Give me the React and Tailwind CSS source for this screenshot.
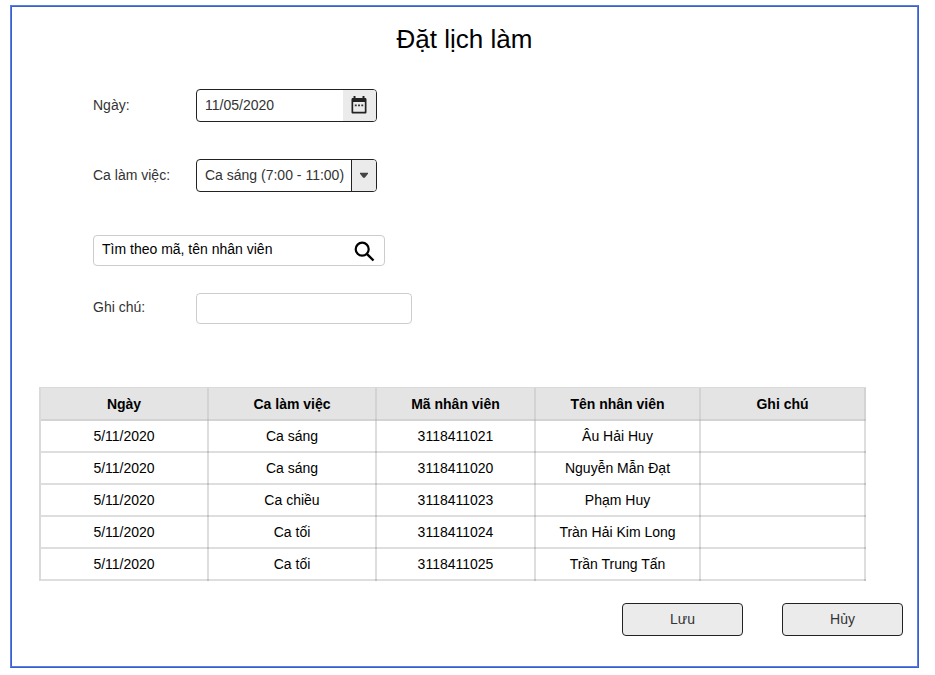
const columns = ['Ngày', 'Ca làm việc', 'Mã nhân viên', 'Tên nhân viên', 'Ghi chú'];

const rows = [
  ['5/11/2020', 'Ca sáng', '3118411021', 'Âu Hải Huy', ''],
  ['5/11/2020', 'Ca sáng', '3118411020', 'Nguyễn Mẫn Đạt', ''],
  ['5/11/2020', 'Ca chiều', '3118411023', 'Phạm Huy', ''],
  ['5/11/2020', 'Ca tối', '3118411024', 'Tràn Hải Kim Long', ''],
  ['5/11/2020', 'Ca tối', '3118411025', 'Trần Trung Tấn', ''],
];

function CalendarIcon() {
  return (
    <svg width="16" height="18" viewBox="0 0 16 18">
      <path
        fill="#222"
        fillRule="evenodd"
        d="M2.500 0h2v2h7V0h2v2h.7c.8 0 1.300.6 1.300 1.300V16.200c0 .8-.5 1.300-1.300 1.300H1.800C1 17.500 .5 17 .5 16.200V3.300C.5 2.600 1 2 1.800 2h.7zM2.200 6v9.800h11.600V6z"
      />
      <path fill="#333" d="M3.800 8.500h1.900v1.800H3.800zM7.050 8.500h1.900v1.800h-1.900zM10.300 8.500h1.900v1.800h-1.900z" />
    </svg>
  );
}

function SearchIcon() {
  return (
    <svg width="21" height="21" viewBox="0 0 21 21" fill="none" stroke="#000">
      <circle cx="8.200" cy="8.200" r="6.500" strokeWidth="2.200" />
      <path d="M12.800 12.800L19.500 19.500" strokeWidth="2.400" />
    </svg>
  );
}

function TableRow({ cells, header }) {
  return (
    <div
      role="row"
      className={
        'grid grid-cols-[168px_168px_159px_165px_165px] border-b-2 ' +
        (header ? 'h-[33px] border-black/7 bg-[#e4e4e4] font-bold' : 'h-8 border-black/13')
      }
    >
      {cells.map((cell, i) => (
        <div
          key={i}
          role="cell"
          className={
            '-mb-0.5 flex items-center justify-center border-r-2 ' +
            (header ? 'border-black/7 pb-px' : 'border-black/13 pb-[3px]')
          }
        >
          {cell}
        </div>
      ))}
    </div>
  );
}

export default function App() {
  return (
    <div className="h-[675px] w-[935px] bg-white pt-[5px] pl-[10px] font-['Liberation_Sans',Arial,sans-serif] text-sm text-black">
      <div className="h-[663px] w-[909px] border border-t-[#5b7fe3] border-r-[#3a5fc8] border-b-[#3a5fc8] border-l-[#5b7fe3]">
        <div className="flex h-full flex-col border border-t-[#3a5fc8] border-r-[#5b7fe3] border-b-[#5b7fe3] border-l-[#3a5fc8]">
          <h1 className="mt-4 text-center text-[26px] leading-[32px]">Đặt lịch làm</h1>

          <div className="mt-[34px] ml-[81px] flex h-[33px] items-center text-[#333]">
            <label className="w-[103px] pb-0.5">Ngày:</label>
            <div className="flex h-full w-[181px] overflow-hidden rounded border border-[#222]">
              <span className="flex flex-1 items-center pb-0.5 pl-2">11/05/2020</span>
              <span className="flex w-[33px] items-center justify-center bg-[#ebebeb] pr-px pb-px">
                <CalendarIcon />
              </span>
            </div>
          </div>

          <div className="mt-[37px] ml-[81px] flex h-[33px] items-center text-[#333]">
            <label className="w-[103px] pb-0.5">Ca làm việc:</label>
            <div className="flex h-full w-[181px] overflow-hidden rounded border border-[#222]">
              <span className="flex flex-1 items-center pb-0.5 pl-2 whitespace-nowrap">Ca sáng (7:00 - 11:00)</span>
              <span className="flex w-[25px] shrink-0 items-center justify-center border-l border-[#222] bg-[#ebebeb] pb-px">
                <svg width="8" height="6" viewBox="0 0 8 6">
                  <path fill="#444" d="M0 .8h8v1L4.800 5.800H3.200L0 1.800z" />
                </svg>
              </span>
            </div>
          </div>

          <div className="mt-[43px] ml-[81px] flex h-[31px] w-[292px] items-center justify-between rounded border border-[#ccc] pr-[9px] pl-2">
            <span className="pb-[3px]">Tìm theo mã, tên nhân viên</span>
            <span className="pt-0.5">
              <SearchIcon />
            </span>
          </div>

          <div className="mt-[27px] ml-[81px] flex h-[31px] items-center text-[#333]">
            <label className="w-[103px] pb-[3px]">Ghi chú:</label>
            <div className="h-full w-[216px] rounded border border-[#ccc]" />
          </div>

          <div
            role="table"
            className="mt-[63px] ml-[27px] w-[827px] border-t border-l-2 border-[#dadada]"
          >
            <TableRow cells={columns} header />
            {rows.map((row, i) => (
              <TableRow key={i} cells={row} />
            ))}
          </div>

          <div className="mt-[22px] ml-[610px] flex gap-[39px] text-[#333]">
            <button className="h-[33px] w-[121px] rounded border border-[#222] bg-[#ebebeb] pb-0.5">Lưu</button>
            <button className="h-[33px] w-[121px] rounded border border-[#222] bg-[#ebebeb] pb-0.5">Hủy</button>
          </div>
        </div>
      </div>
    </div>
  );
}
